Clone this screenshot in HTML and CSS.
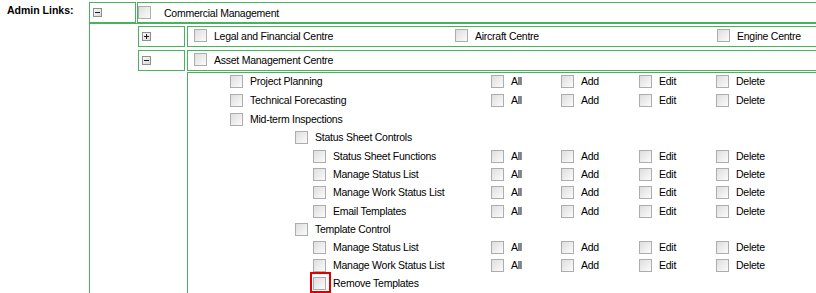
FILE: index.html
```html
<!DOCTYPE html>
<html lang="en">
<head>
    <meta charset="utf-8" />
    <title>Admin Links</title>
    <link rel="stylesheet" href="styles.css">
</head>
<body>
    <div class="admin">
        <div class="admin-label">Admin Links:</div>
        <div class="tree">
            <div class="node-row top-row">
                <div class="toggle-cell"><span class="tgl"></span></div>
                <div class="node-cell root-node">
                    <span class="cb"></span><span class="name">Commercial Management</span>
                </div>
            </div>
            <div class="children">
                <div class="node-row">
                    <div class="toggle-cell"><span class="tgl plus"></span></div>
                    <div class="node-cell sub-node multi">
                        <div class="item"><span class="cb"></span><span class="name">Legal and Financial Centre</span></div>
                        <div class="item"><span class="cb"></span><span class="name">Aircraft Centre</span></div>
                        <div class="item"><span class="cb"></span><span class="name">Engine Centre</span></div>
                    </div>
                </div>
                <div class="node-row">
                    <div class="toggle-cell"><span class="tgl"></span></div>
                    <div class="node-cell sub-node">
                        <span class="cb"></span><span class="name">Asset Management Centre</span>
                    </div>
                </div>
                <div class="perm-list">
                    <div class="perm-row">
                        <div class="item lvl1"><span class="cb"></span><span class="name">Project Planning</span></div>
                        <div class="item"><span class="cb"></span><span class="name">All</span></div>
                        <div class="item"><span class="cb"></span><span class="name">Add</span></div>
                        <div class="item"><span class="cb"></span><span class="name">Edit</span></div>
                        <div class="item"><span class="cb"></span><span class="name">Delete</span></div>
                    </div>
                    <div class="perm-row spaced">
                        <div class="item lvl1"><span class="cb"></span><span class="name">Technical Forecasting</span></div>
                        <div class="item"><span class="cb"></span><span class="name">All</span></div>
                        <div class="item"><span class="cb"></span><span class="name">Add</span></div>
                        <div class="item"><span class="cb"></span><span class="name">Edit</span></div>
                        <div class="item"><span class="cb"></span><span class="name">Delete</span></div>
                    </div>
                    <div class="perm-row spaced">
                        <div class="item lvl1"><span class="cb"></span><span class="name">Mid-term Inspections</span></div>
                    </div>
                    <div class="perm-row">
                        <div class="item lvl2"><span class="cb"></span><span class="name">Status Sheet Controls</span></div>
                    </div>
                    <div class="perm-row spaced">
                        <div class="item lvl3"><span class="cb"></span><span class="name">Status Sheet Functions</span></div>
                        <div class="item"><span class="cb"></span><span class="name">All</span></div>
                        <div class="item"><span class="cb"></span><span class="name">Add</span></div>
                        <div class="item"><span class="cb"></span><span class="name">Edit</span></div>
                        <div class="item"><span class="cb"></span><span class="name">Delete</span></div>
                    </div>
                    <div class="perm-row">
                        <div class="item lvl3"><span class="cb"></span><span class="name">Manage Status List</span></div>
                        <div class="item"><span class="cb"></span><span class="name">All</span></div>
                        <div class="item"><span class="cb"></span><span class="name">Add</span></div>
                        <div class="item"><span class="cb"></span><span class="name">Edit</span></div>
                        <div class="item"><span class="cb"></span><span class="name">Delete</span></div>
                    </div>
                    <div class="perm-row">
                        <div class="item lvl3"><span class="cb"></span><span class="name">Manage Work Status List</span></div>
                        <div class="item"><span class="cb"></span><span class="name">All</span></div>
                        <div class="item"><span class="cb"></span><span class="name">Add</span></div>
                        <div class="item"><span class="cb"></span><span class="name">Edit</span></div>
                        <div class="item"><span class="cb"></span><span class="name">Delete</span></div>
                    </div>
                    <div class="perm-row spaced">
                        <div class="item lvl3"><span class="cb"></span><span class="name">Email Templates</span></div>
                        <div class="item"><span class="cb"></span><span class="name">All</span></div>
                        <div class="item"><span class="cb"></span><span class="name">Add</span></div>
                        <div class="item"><span class="cb"></span><span class="name">Edit</span></div>
                        <div class="item"><span class="cb"></span><span class="name">Delete</span></div>
                    </div>
                    <div class="perm-row">
                        <div class="item lvl2"><span class="cb"></span><span class="name">Template Control</span></div>
                    </div>
                    <div class="perm-row">
                        <div class="item lvl3"><span class="cb"></span><span class="name">Manage Status List</span></div>
                        <div class="item"><span class="cb"></span><span class="name">All</span></div>
                        <div class="item"><span class="cb"></span><span class="name">Add</span></div>
                        <div class="item"><span class="cb"></span><span class="name">Edit</span></div>
                        <div class="item"><span class="cb"></span><span class="name">Delete</span></div>
                    </div>
                    <div class="perm-row">
                        <div class="item lvl3"><span class="cb"></span><span class="name">Manage Work Status List</span></div>
                        <div class="item"><span class="cb"></span><span class="name">All</span></div>
                        <div class="item"><span class="cb"></span><span class="name">Add</span></div>
                        <div class="item"><span class="cb"></span><span class="name">Edit</span></div>
                        <div class="item"><span class="cb"></span><span class="name">Delete</span></div>
                    </div>
                    <div class="perm-row">
                        <div class="item lvl3"><span class="cb flagged"></span><span class="name">Remove Templates</span></div>
                    </div>
                </div>
            </div>
        </div>
    </div>
</body>
</html>
```

FILE: styles.css
```css
html, body {
    margin: 0;
    overflow: hidden;
    background: #fff;
}

body {
    font-family: "Liberation Sans", Arial, sans-serif;
    font-size: 10.5px;
    letter-spacing: -0.25px;
    color: #000;
}

.admin {
    display: flex;
    width: 900px;
}

.admin-label {
    width: 89px;
    flex: none;
    box-sizing: border-box;
    padding: 4px 0 0 7px;
    font-weight: bold;
    letter-spacing: 0;
}

.tree {
    flex: 1;
    margin-top: 2px;
}

.node-row {
    display: flex;
    gap: 2px;
}

    .node-row.top-row {
        gap: 1px;
    }

.toggle-cell {
    width: 47px;
    height: 21px;
    flex: none;
    box-sizing: border-box;
    border: 1px solid #47b35a;
    display: flex;
    align-items: center;
    padding-left: 3px;
}

.node-cell {
    flex: 1;
    height: 21px;
    box-sizing: border-box;
    border: 1px solid #47b35a;
    display: flex;
    align-items: center;
}

.root-node .cb {
    margin-right: 13px;
}

.sub-node {
    padding: 0 0 2px 6px;
}

.multi {
    display: grid;
    grid-template-columns: 261px 262px 1fr;
}

/* expand / collapse box */
.tgl {
    position: relative;
    width: 9px;
    height: 9px;
    box-sizing: border-box;
    border: 1px solid #8f8f8f;
    background: linear-gradient(135deg, #f6f6f6, #d9d9d9);
}

    .tgl::before {
        content: "";
        position: absolute;
        left: 1px;
        top: 3px;
        width: 5px;
        height: 1px;
        background: #1e1e1e;
    }

    .tgl.plus::after {
        content: "";
        position: absolute;
        left: 3px;
        top: 1px;
        width: 1px;
        height: 5px;
        background: #1e1e1e;
    }

.cb {
    position: relative;
    width: 13px;
    height: 13px;
    flex: none;
    box-sizing: border-box;
    border: 1px solid #adadad;
    background: linear-gradient(135deg, #dedede, #fbfbfb);
    margin-right: 7px;
}

    .cb.flagged::after {
        content: "";
        position: absolute;
        left: -4px;
        top: -6px;
        width: 21px;
        height: 21px;
        box-sizing: border-box;
        border: 2px solid #e00000;
    }

.item {
    display: flex;
    align-items: center;
    white-space: nowrap;
}

.children {
    border-top: 1px solid #47b35a;
    border-left: 1px solid #47b35a;
    padding: 2px 0 0 48px;
    display: flex;
    flex-direction: column;
    gap: 3px;
}

.perm-list {
    margin: -2px 0 0 49px;
    border-top: 1px solid #47b35a;
    border-left: 1px solid #47b35a;
}

.perm-row {
    display: grid;
    grid-template-columns: 303px 70px 78px 77px 1fr;
    height: 18px;
}

    .perm-row.spaced {
        margin-top: 1px;
    }

    .perm-row .item {
        align-items: flex-start;
    }

    .perm-row .cb {
        margin-top: 2px;
    }

    .perm-row .name {
        line-height: 17px;
    }

.lvl1 {
    padding-left: 42px;
}

.lvl2 {
    padding-left: 107px;
}

.lvl3 {
    padding-left: 125px;
}
```
